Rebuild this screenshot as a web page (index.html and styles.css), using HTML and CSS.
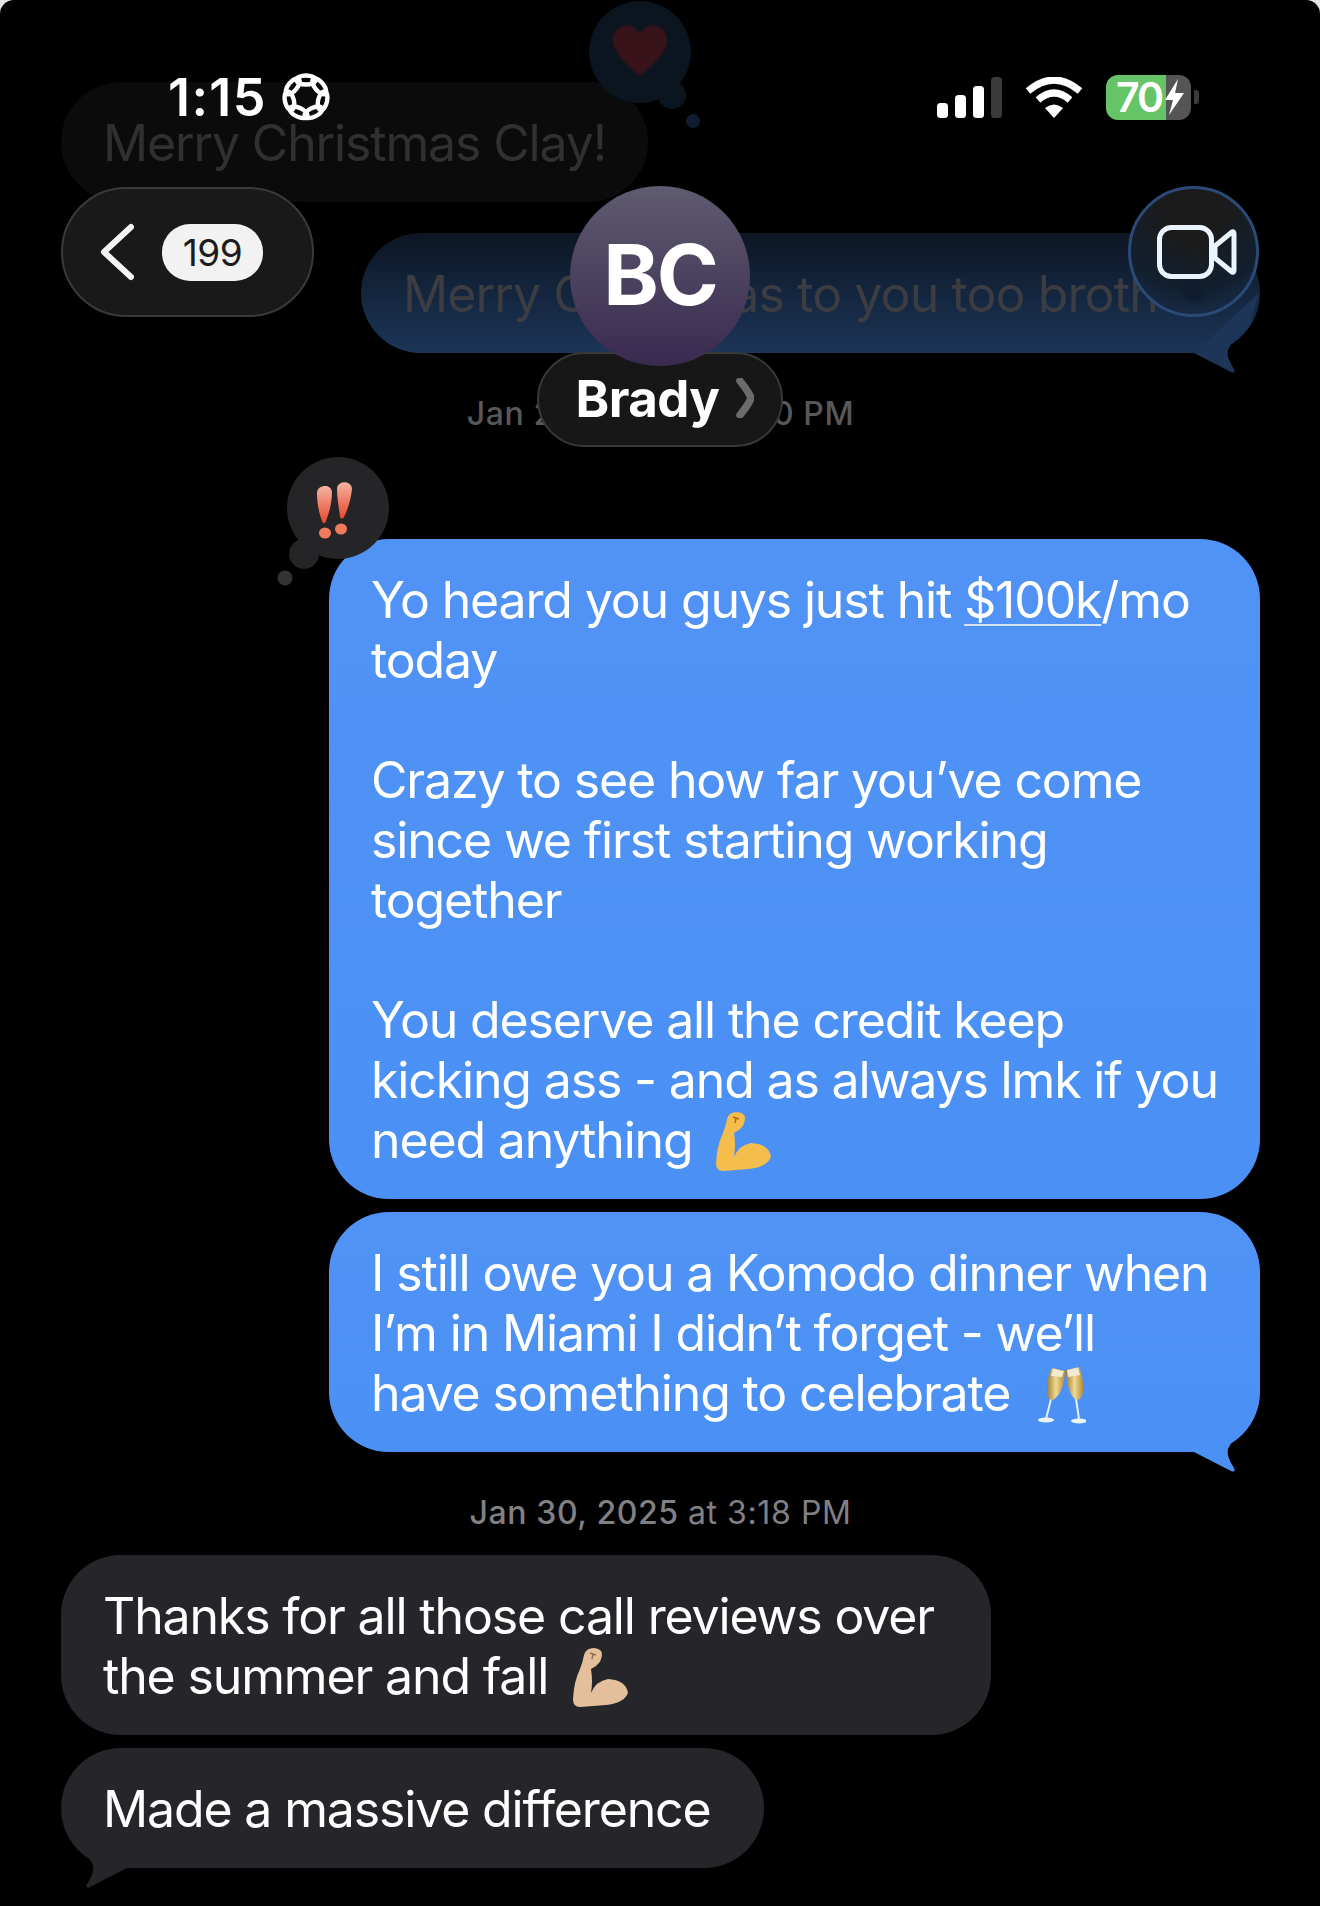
FILE: index.html
```html
<!DOCTYPE html>
<html lang="en">
<head>
    <meta charset="UTF-8"/>
    <title>Brady</title>
    <link rel="stylesheet" href="styles.css">
</head>
<body>
<div class="phone">
    <main class="thread">
        <div class="bubble faded-grey">
            Merry Christmas Clay!
            <svg class="tapback-art heart-bubble" width="130" height="130" viewBox="0 0 130 130">
                <circle cx="51" cy="52" r="51" fill="#0b1520"/>
                <circle cx="83" cy="95" r="14" fill="#0b1520"/>
                <circle cx="104" cy="121" r="7" fill="#0e1c2e"/>
                <path class="heart" d="M51 76 C35 62 24 52 24 40 C24 24 44 20 51 34 C58 20 78 24 78 40 C78 52 67 62 51 76 Z" fill="#38141a"/>
            </svg>
        </div>
        <div class="bubble faded-blue">
            Merry Christmas to you too brother
            <svg class="tail" width="70" height="85" viewBox="0 0 70 85">
                <path d="M4 60 L41 79 Q46 81 44 76 Q36 64 38 57 Q42 47 59 34 L69 0 Z" fill="#1d3658"/>
            </svg>
        </div>
        <div class="stamp">Jan 24, 2024 at 7:50 PM</div>

        <div class="bubble blue big">
            <svg class="tapback-art bang-bubble" width="110" height="130" viewBox="0 0 110 130">
                <circle cx="58" cy="50" r="51" fill="#252528"/>
                <circle cx="24" cy="96" r="15" fill="#252528"/>
                <circle cx="5" cy="120" r="7.5" fill="#333336"/>
                <defs>
                    <linearGradient id="bang" x1="0" y1="0" x2="0" y2="1">
                        <stop offset="0" stop-color="#f3b3a2"/>
                        <stop offset="1" stop-color="#e9482c"/>
                    </linearGradient>
                </defs>
                <path d="M37 35 C37 27 51 25 52 34 C52 45 49 55 46 63 C45 66 43 66 42 63 C39 55 37 45 37 35 Z" fill="url(#bang)"/>
                <path d="M57 31 C57 22 72 22 72 31 C71 41 68 51 64 59 C63 61 61 61 60 59 C59 49 57 41 57 31 Z" fill="url(#bang)"/>
                <ellipse cx="45" cy="75" rx="6" ry="5.500" fill="#f07a5c"/>
                <ellipse cx="61" cy="71" rx="6" ry="5.500" fill="#f07a5c"/>
            </svg>
            Yo heard you guys just hit <span class="link">$100k</span>/mo<br>
            today<br>
            <br>
            Crazy to see how far you’ve come<br>
            since we first starting working<br>
            together<br>
            <br>
            You deserve all the credit keep<br>
            kicking ass - and as always lmk if you<br>
            need anything
            <svg class="emoji muscle" width="58" height="60" viewBox="14 9 58 60">
                <path d="M26 16 Q28 9 36 9 Q44 10 44 15 Q44 22 38 27 L33 30 Q35 42 33 54 Q38 42 50 40 Q68 41 70 54 Q66 64 48 66 L22 68 Q15 68 15 60 Q16 42 22 30 Q25 22 26 16 Z" fill="#f4bd4c"/>
                <path d="M32 14 L38 16 M35 15 L34 20" stroke="#a96a18" stroke-width="1.400" fill="none"/>
            </svg>
        </div>
        <div class="bubble blue">
            I still owe you a Komodo dinner when<br>
            I’m in Miami I didn’t forget - we’ll<br>
            have something to celebrate
            <svg class="emoji flutes" width="50" height="60" viewBox="7 8 50 60">
                <defs>
                    <linearGradient id="wine" x1="0" y1="0" x2="1" y2="0">
                        <stop offset="0" stop-color="#a27c2e"/>
                        <stop offset="0.5" stop-color="#efd993"/>
                        <stop offset="1" stop-color="#b58a35"/>
                    </linearGradient>
                </defs>
                <path d="M22 42 L17 62 M47 42 L50 62" stroke="#e6eef6" stroke-width="2" fill="none"/>
                <ellipse cx="17" cy="63" rx="8" ry="2.500" fill="#eef3f8"/>
                <ellipse cx="50" cy="64" rx="8" ry="2.500" fill="#eef3f8"/>
                <path d="M23 11 L36 14 Q35 36 24 43 Q18 43 18 34 Q18 20 23 11 Z" fill="url(#wine)"/>
                <path d="M37 13 L50 10 Q55 22 54 34 Q53 43 47 43 Q38 36 37 13 Z" fill="url(#wine)"/>
                <path d="M24 12 L35 14 L33 20 L22 19 Z M38 13 L49 11 L51 18 L39 20 Z" fill="#f3ead2"/>
            </svg>
            <svg class="tail" width="70" height="85" viewBox="0 0 70 85">
                <path d="M4 60 L41 79 Q46 81 44 76 Q36 64 38 57 Q42 47 59 34 L69 0 Z" fill="#4a90f5"/>
            </svg>
        </div>
        <div class="stamp stamp-bright">Jan 30, 2025 <span class="stamp-time">at 3:18 PM</span></div>

        <div class="bubble grey wide">
            Thanks for all those call reviews over<br>
            the summer and fall
            <svg class="emoji muscle" width="58" height="60" viewBox="14 9 58 60">
                <path d="M26 16 Q28 9 36 9 Q44 10 44 15 Q44 22 38 27 L33 30 Q35 42 33 54 Q38 42 50 40 Q68 41 70 54 Q66 64 48 66 L22 68 Q15 68 15 60 Q16 42 22 30 Q25 22 26 16 Z" fill="#e3bf9b"/>
                <path d="M32 14 L38 16 M35 15 L34 20" stroke="#96694a" stroke-width="1.400" fill="none"/>
            </svg>
        </div>
        <div class="bubble grey">
            Made a massive difference
            <svg class="tail tail-left" width="70" height="85" viewBox="0 0 70 85">
                <path d="M4 60 L41 79 Q46 81 44 76 Q36 64 38 57 Q42 47 59 34 L69 0 Z" fill="#26262a"/>
            </svg>
        </div>
    </main>

    <header class="top">
        <div class="status">
            <div class="status-left">
                <span class="clock">1:15</span>
                <svg class="focus" width="50" height="50" viewBox="-25 -25 50 50">
                    <g fill="none" stroke="#fff" stroke-width="4.400">
                        <ellipse cy="-17" rx="9.500" ry="4.500"/>
                        <ellipse cy="-17" rx="9.500" ry="4.500" transform="rotate(51.4)"/>
                        <ellipse cy="-17" rx="9.500" ry="4.500" transform="rotate(102.8)"/>
                        <ellipse cy="-17" rx="9.500" ry="4.500" transform="rotate(154.3)"/>
                        <ellipse cy="-17" rx="9.500" ry="4.500" transform="rotate(205.7)"/>
                        <ellipse cy="-17" rx="9.500" ry="4.500" transform="rotate(257.1)"/>
                        <ellipse cy="-17" rx="9.500" ry="4.500" transform="rotate(308.6)"/>
                    </g>
                </svg>
            </div>
            <div class="status-right">
                <svg width="65" height="41" viewBox="0 0 65 41">
                    <rect x="0" y="26" width="11" height="15" rx="3.500" fill="#fff"/>
                    <rect x="18" y="18" width="11" height="23" rx="3.500" fill="#fff"/>
                    <rect x="36" y="9" width="11" height="32" rx="3.500" fill="#fff"/>
                    <rect x="54" y="0" width="11" height="41" rx="3.500" fill="#3a3a3c"/>
                </svg>
                <svg width="58" height="41" viewBox="0 0 58 41">
                    <path d="M3 14 Q29 -8 55 14" fill="none" stroke="#fff" stroke-width="7"/>
                    <path d="M13 23 Q29 9 45 23" fill="none" stroke="#fff" stroke-width="7"/>
                    <path d="M20 31 Q29 24 38 31 L29 41 Z" fill="#fff"/>
                </svg>
                <div class="battery-wrap">
                    <div class="battery">
                        <span class="battery-level">70</span>
                        <svg width="24" height="36" viewBox="0 0 24 36">
                            <path d="M16 0 L3 21 H11 L7 36 L22 14 H13 Z" fill="#fff"/>
                        </svg>
                    </div>
                    <span class="battery-nub"></span>
                </div>
            </div>
        </div>

        <nav class="nav">
            <div class="back-pill">
                <svg width="36" height="58" viewBox="0 0 36 58">
                    <path d="M32 4 L5 29 L32 54" fill="none" stroke="#f4f4f4" stroke-width="6" stroke-linecap="round" stroke-linejoin="round"/>
                </svg>
                <span class="count">199</span>
            </div>
            <div class="contact">
                <div class="avatar">BC</div>
                <div class="name-pill">
                    <span class="name">Brady</span>
                    <svg width="18" height="40" viewBox="0 0 18 40">
                        <path d="M4 3 Q13 14 15 20 Q13 26 4 37" fill="none" stroke="#6b6b6d" stroke-width="7.500" stroke-linecap="round"/>
                    </svg>
                </div>
            </div>
            <div class="video">
                <svg width="80" height="54" viewBox="0 0 80 54">
                    <rect x="2.500" y="2.500" width="52" height="49" rx="12" fill="none" stroke="#eaf4ff" stroke-width="5"/>
                    <path d="M58 21 L75 7 Q77 6 77 9 V45 Q77 48 75 47 L58 33 Z" fill="none" stroke="#eaf4ff" stroke-width="5" stroke-linejoin="round"/>
                </svg>
            </div>
        </nav>
    </header>
</div>
</body>
</html>
```

FILE: styles.css
```css
* {
    box-sizing: border-box;
}

html,
body {
    margin: 0;
    background: #e4e4e4;
}

.phone {
    position: relative;
    width: 1320px;
    height: 1906px;
    overflow: hidden;
    background: #000;
    border-radius: 14px 14px 0 0;
    font-family: Inter, "Liberation Sans", sans-serif;
    color: #fff;
}

/* messages */

.thread {
    display: flex;
    flex-direction: column;
    padding: 82px 60px 0 61px;
}

.bubble {
    position: relative;
    z-index: 0;
    align-self: flex-start;
    padding: 31px 54px 29px 42px;
    border-radius: 60px;
    font-size: 50px;
    font-weight: 380;
    line-height: 60px;
    letter-spacing: -1.15px;
    white-space: nowrap;
}

.faded-grey {
    width: 587px;
    background: #0b0b0c;
    color: #303032;
}

.faded-blue {
    align-self: flex-end;
    width: 899px;
    margin-top: 31px;
    background: linear-gradient(#0c1624, #1c3557);
    color: #3b3d42;
    letter-spacing: -0.9px;
}

.blue {
    align-self: flex-end;
    width: 931px;
    margin-top: 13px;
    background: linear-gradient(#5193f5, #4a90f5);
}

.blue.big {
    margin-top: 105px;
}

.grey {
    margin-top: 13px;
    background: #26262a;
}

.grey.wide {
    width: 930px;
    margin-top: 22px;
}

.link {
    text-decoration: underline;
    text-decoration-thickness: 2px;
    text-decoration-color: #d5e4fb;
    text-underline-offset: 6px;
}

.stamp {
    margin-top: 41px;
    font-size: 32px;
    font-weight: 500;
    line-height: 40px;
    letter-spacing: 0.6px;
    text-align: center;
    color: #58585a;
}

.stamp-bright {
    color: #818185;
}

.stamp-time {
    font-weight: 400;
}

.emoji {
    display: inline-block;
    margin: -10px 0 -10px 10px;
    vertical-align: -4px;
}

.grey .emoji {
    margin-left: 11px;
}

.flutes {
    margin-left: 13px;
}

.tail {
    position: absolute;
    z-index: -1;
    right: 0;
    bottom: -25px;
}

.tail-left {
    right: auto;
    left: 0;
    transform: scaleX(-1);
}

.tapback-art {
    position: absolute;
    overflow: visible;
}

.heart-bubble {
    left: 528px;
    top: -82px;
}

.heart {
    filter: blur(1px);
}

.bang-bubble {
    left: -49px;
    top: -81px;
}

/* overlay bar */

.top {
    position: absolute;
    top: 0;
    left: 0;
    width: 100%;
}

.status {
    display: flex;
    justify-content: space-between;
    align-items: center;
    height: 46px;
    margin-top: 74px;
    padding: 0 121px 0 168px;
}

.status-left {
    display: flex;
    align-items: center;
    gap: 14px;
}

.clock {
    font-size: 52px;
    font-weight: 600;
    letter-spacing: 1.4px;
}

.status-right {
    display: flex;
    align-items: center;
    gap: 23px;
}

.battery-wrap {
    display: flex;
    align-items: center;
    gap: 3px;
}

.battery {
    display: flex;
    align-items: center;
    width: 85px;
    height: 45px;
    padding-left: 10px;
    border-radius: 12px;
    background: linear-gradient(to right, #65c466 71%, #555 71%);
    font-size: 41px;
    font-weight: 600;
    letter-spacing: -2px;
}

.battery-nub {
    width: 5px;
    height: 14px;
    border-radius: 0 3px 3px 0;
    background: #3a3a3c;
}

.nav {
    display: grid;
    grid-template-columns: 1fr auto 1fr;
    align-items: start;
    margin-top: 66px;
    padding: 0 61px;
}

.back-pill {
    display: flex;
    align-items: center;
    gap: 27px;
    width: 253px;
    height: 130px;
    margin-top: 1px;
    padding-left: 36px;
    border: 2px solid #3a3a3a;
    border-radius: 65px;
    background: #191919;
}

.count {
    display: flex;
    justify-content: center;
    align-items: center;
    width: 101px;
    height: 57px;
    border-radius: 28px;
    background: #f2f2f2;
    color: #1c1c1e;
    font-size: 37px;
    letter-spacing: -0.5px;
}

.contact {
    display: flex;
    flex-direction: column;
    align-items: center;
}

.avatar {
    position: relative;
    z-index: 1;
    display: flex;
    justify-content: center;
    align-items: center;
    width: 180px;
    height: 180px;
    padding-bottom: 4px;
    border-radius: 50%;
    background: linear-gradient(#5f5b70, #392a50);
    font-size: 84px;
    font-weight: 700;
    letter-spacing: -2px;
}

.name-pill {
    position: relative;
    display: flex;
    justify-content: center;
    align-items: center;
    gap: 17px;
    width: 246px;
    height: 95px;
    margin-top: -14px;
    padding-left: 10px;
    border: 2px solid #383838;
    border-radius: 48px;
    background: #171717;
    font-size: 51px;
    font-weight: 700;
    letter-spacing: -0.6px;
}

.name {
    margin-top: -3px;
}

.name-pill svg {
    margin-top: -3px;
}

.video {
    display: flex;
    justify-self: end;
    justify-content: center;
    align-items: center;
    width: 131px;
    height: 131px;
    padding-left: 6px;
    border: 3px solid #2c4a78;
    border-radius: 50%;
    background:
        radial-gradient(circle at 50% 82%, #0f1c30 6%, transparent 12%),
        radial-gradient(circle at 50% 18%, #1b1b1b 25%, #121f30 65%, #1a3152);
}
```
